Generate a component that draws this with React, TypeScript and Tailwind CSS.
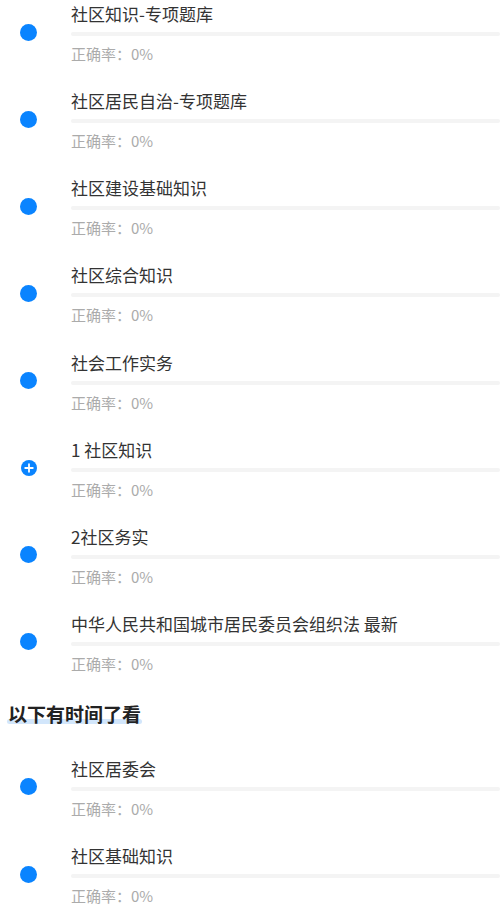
import React, { FC } from 'react'

type Item = { title: string; plus?: boolean }

const mainItems: Item[] = [
    { title: '社区知识-专项题库' },
    { title: '社区居民自治-专项题库' },
    { title: '社区建设基础知识' },
    { title: '社区综合知识' },
    { title: '社会工作实务' },
    { title: '1 社区知识', plus: true },
    { title: '2社区务实' },
    { title: '中华人民共和国城市居民委员会组织法 最新' },
]

const laterItems: Item[] = [{ title: '社区居委会' }, { title: '社区基础知识' }]

const Dot: FC<{ plus?: boolean }> = ({ plus }) =>
    plus ? (
        <svg width="16" height="16" viewBox="0 0 16 16" className="ml-[20.5px]">
            <circle cx="8" cy="8" r="8" fill="#0a84ff" />
            <path d="M8 4.2v7.6M4.2 8h7.6" stroke="#fff" strokeWidth="1.8" strokeLinecap="round" />
        </svg>
    ) : (
        <div className="ml-[20px] w-[17px] h-[17px] rounded-full bg-[#0a84ff]" />
    )

const Row: FC<{ item: Item }> = ({ item }) => (
    <div className="h-[87.14px] flex items-start">
        <div className="h-[64px] flex items-center w-[71px] shrink-0">
            <Dot plus={item.plus} />
        </div>
        <div className="flex-1 flex flex-col">
            <div className="pt-[3px] text-[17px] leading-[22px] text-[#333]">{item.title}</div>
            <div className="mt-[7px] h-[4px] rounded-full bg-[#f4f4f4]" />
            <div className="mt-[8px] text-[15px] leading-[20px] text-[#ababab]">正确率：0%</div>
        </div>
    </div>
)

export default function App() {
    return (
        <div
            className="w-[500px] bg-white overflow-hidden"
            style={{ fontFamily: '"Noto Sans CJK SC", "Liberation Sans", sans-serif' }}
        >
            {mainItems.map((it) => (
                <Row key={it.title} item={it} />
            ))}
            <div className="h-[57.9px] pt-[4px] pl-[8px]">
                <span className="relative inline-block">
                    <span className="absolute left-[-1px] right-[-1px] bottom-[3px] h-[5px] rounded-full bg-[#d2e6fb]" />
                    <span className="relative font-bold text-[19px] leading-[26px] text-[#222]">以下有时间了看</span>
                </span>
            </div>
            {laterItems.map((it) => (
                <Row key={it.title} item={it} />
            ))}
        </div>
    )
}
